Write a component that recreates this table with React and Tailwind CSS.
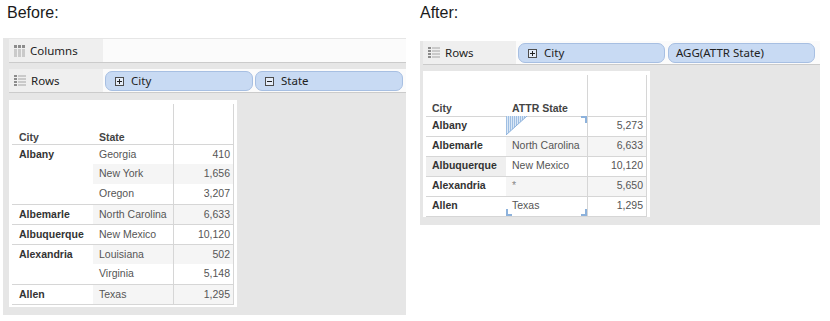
import React from 'react';

// Two Tableau-style views of the same crosstab: before and after ATTR() on State

const BEFORE_GROUPS = [
  { city: 'Albany', rows: [['Georgia', '410'], ['New York', '1,656'], ['Oregon', '3,207']] },
  { city: 'Albemarle', rows: [['North Carolina', '6,633']] },
  { city: 'Albuquerque', rows: [['New Mexico', '10,120']] },
  { city: 'Alexandria', rows: [['Louisiana', '502'], ['Virginia', '5,148']] },
  { city: 'Allen', rows: [['Texas', '1,295']] },
];

const AFTER_ROWS = [
  { city: 'Albany', state: '', value: '5,273' },
  { city: 'Albemarle', state: 'North Carolina', value: '6,633' },
  { city: 'Albuquerque', state: 'New Mexico', value: '10,120' },
  { city: 'Alexandria', state: '*', value: '5,650' },
  { city: 'Allen', state: 'Texas', value: '1,295' },
];

const tableFont = "font-['Liberation_Sans',Arial,sans-serif] text-[10.5px]";
const shelfFont = "font-['Noto_Sans',sans-serif] text-[11.5px] text-[#222]";

function ColumnsIcon() {
  return (
    <svg width="11" height="12" viewBox="0 0 11 12">
      {[0, 4, 8].map(x => (
        <g key={x}>
          <rect x={x} y="0" width="3" height="3" fill="#8c8c8c" />
          <rect x={x} y="4" width="3" height="8" fill="#cacaca" />
        </g>
      ))}
    </svg>
  );
}

function RowsIcon() {
  return (
    <svg width="12" height="11" viewBox="0 0 12 11">
      {[0, 3, 6, 9].map(y => (
        <g key={y}>
          <rect x="0" y={y} width="3" height="2" fill="#8c8c8c" />
          <rect x="4" y={y} width="8" height="2" fill="#cacaca" />
        </g>
      ))}
    </svg>
  );
}

function ToggleBox({ plus }) {
  return (
    <svg width="9" height="9" viewBox="0 0 9 9" className="shrink-0">
      <rect x="0.5" y="0.5" width="8" height="8" fill="#e4ecf8" stroke="#4d4d4d" />
      <line x1="2" y1="4.5" x2="7" y2="4.5" stroke="#222" />
      {plus && <line x1="4.5" y1="2" x2="4.5" y2="7" stroke="#222" />}
    </svg>
  );
}

function Pill({ children, toggle, width }) {
  return (
    <div className={`flex h-[20px] items-center gap-[7px] rounded-[7px] border border-[#a7bfe2] bg-[#c8daf3] ${width} ${toggle ? 'pl-[9px]' : 'pl-[7px]'} ${shelfFont}`}>
      {toggle && <ToggleBox plus={toggle === 'plus'} />}
      <span className="leading-none">{children}</span>
    </div>
  );
}

function Shelf({ icon, label, labelWidth, children }) {
  return (
    <div className="flex h-[24px] border-b border-[#cbcbcb] bg-[#fbfbfb]">
      <div className={`flex shrink-0 items-center gap-[5px] bg-[#efefef] pl-[5px] ${labelWidth} ${shelfFont}`}>
        {icon}
        <span className="leading-none">{label}</span>
      </div>
      <div className="flex items-start gap-[2px] pl-[2px] pt-[2px]">{children}</div>
    </div>
  );
}

function BeforeTable() {
  let band = 0;
  return (
    <div className={`w-[228px] bg-white pl-[3px] pr-[3px] pt-[4px] pb-[2px] ${tableFont}`}>
      <div className="flex h-[40px] font-bold text-[#444]">
        <div className="w-[81px] pl-[7px] pt-[26px] leading-[14px]">City</div>
        <div className="w-[80px] pl-[6px] pt-[26px] leading-[14px]">State</div>
        <div className="w-[61px] border-x border-[#d6d6d6]" />
      </div>
      <div className="border-b border-[#d6d6d6]">
        {BEFORE_GROUPS.map(g => (
          <div key={g.city} className="flex border-t border-[#d6d6d6]">
            <div className="w-[81px] pl-[7px] font-bold leading-[19px] text-[#333]">{g.city}</div>
            <div className="flex flex-col">
              {g.rows.map(([state, value], i) => {
                const shaded = band++ % 2 === 1;
                return (
                  <div key={state} className={`flex ${i === 0 ? 'h-[19px]' : 'h-[20px]'} items-center ${shaded ? 'bg-[#f5f5f5]' : ''}`}>
                    <div className="w-[80px] pl-[6px] text-[#555]">{state}</div>
                    <div className="h-full w-[61px] border-x border-[#d6d6d6] pr-[3px] text-right leading-[19px] text-[#555]">{value}</div>
                  </div>
                );
              })}
            </div>
          </div>
        ))}
      </div>
    </div>
  );
}

function Corner({ className }) {
  return <div className={`absolute h-[7px] w-[6px] border-[#8db2dc] ${className}`} />;
}

function AfterTable() {
  return (
    <div className={`w-[227px] bg-white pl-[3px] pr-[3px] pt-[4px] ${tableFont}`}>
      <div className="flex h-[41px] font-bold text-[#444]">
        <div className="w-[80px] pl-[6px] pt-[26px] leading-[14px]">City</div>
        <div className="w-[81px] pl-[6px] pt-[26px] leading-[14px]">ATTR State</div>
        <div className="w-[60px] border-x border-[#d6d6d6]" />
      </div>
      <div className="border-b border-[#d6d6d6]">
        {AFTER_ROWS.map((r, i) => {
          const shaded = i % 2 === 1;
          return (
            <div key={r.city} className="flex h-[20px] border-t border-[#d6d6d6] leading-[16px]">
              <div className={`w-[80px] pl-[6px] font-bold text-[#333] ${r.city === 'Albuquerque' ? 'bg-[#efefef]' : ''}`}>{r.city}</div>
              <div className={`relative w-[81px] pl-[6px] ${r.state === '*' ? 'text-[#888]' : 'text-[#555]'} ${shaded ? 'bg-[#f5f5f5]' : ''}`}>
                {r.state}
                {i === 0 && (
                  <>
                    <svg width="21" height="19" viewBox="0 0 21 19" className="absolute left-0 top-[-1px]">
                      <defs>
                        <pattern id="hatch" width="2" height="19" patternUnits="userSpaceOnUse">
                          <rect width="1" height="19" fill="#9fbfe3" />
                          <rect x="1" width="1" height="19" fill="#dbe8f6" />
                        </pattern>
                      </defs>
                      <polygon points="0,0 21,0 0,19" fill="url(#hatch)" />
                      <line x1="21" y1="0" x2="0" y2="19" stroke="#8db2dc" />
                    </svg>
                    <Corner className="right-0 top-[-1px] border-r-2 border-t-2" />
                  </>
                )}
                {i === AFTER_ROWS.length - 1 && (
                  <>
                    <Corner className="bottom-0 left-0 border-b-2 border-l-2" />
                    <Corner className="bottom-0 right-0 border-b-2 border-r-2" />
                  </>
                )}
              </div>
              <div className={`w-[60px] border-x border-[#d6d6d6] pr-[3px] text-right text-[#555] ${shaded ? 'bg-[#f5f5f5]' : ''}`}>{r.value}</div>
            </div>
          );
        })}
      </div>
    </div>
  );
}

export default function App() {
  return (
    <div className="flex h-[321px] w-[830px] overflow-hidden bg-white">
      {/* Before */}
      <div className="w-[415px] pl-[3px] pt-[3px]">
        <p className="ml-[4px] font-['Liberation_Sans',Arial,sans-serif] text-[16px] leading-[20px] text-[#1a1a1a]">Before:</p>
        <div className="mt-[15px] flex w-[403px] flex-col gap-[6px] bg-[#e6e6e6] pb-[8px] pl-[6px] pt-[1px]">
          <Shelf icon={<ColumnsIcon />} label="Columns" labelWidth="w-[94px]" />
          <Shelf icon={<RowsIcon />} label="Rows" labelWidth="w-[94px]">
            <Pill toggle="plus" width="w-[148px]">City</Pill>
            <Pill toggle="minus" width="w-[148px]">State</Pill>
          </Shelf>
          <div className="mt-[1px]">
            <BeforeTable />
          </div>
        </div>
      </div>

      {/* After */}
      <div className="w-[415px] pl-[5px] pt-[3px]">
        <p className="font-['Liberation_Sans',Arial,sans-serif] text-[16px] leading-[20px] text-[#1a1a1a]">After:</p>
        <div className="mt-[18px] flex w-[400px] flex-col gap-[6px] bg-[#e6e6e6] pb-[8px] pl-[3px]">
          <Shelf icon={<RowsIcon />} label="Rows" labelWidth="w-[93px]">
            <Pill toggle="plus" width="w-[147px]">City</Pill>
            <div className="ml-[1px]">
              <Pill width="w-[147px]">AGG(ATTR State)</Pill>
            </div>
          </Shelf>
          <AfterTable />
        </div>
      </div>
    </div>
  );
}
